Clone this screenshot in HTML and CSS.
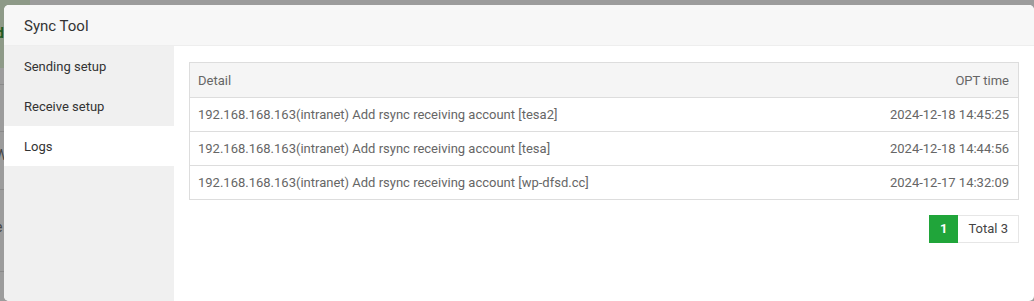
FILE: index.html
```html
<!DOCTYPE html>
<html lang="en">
<head>
    <meta charset="UTF-8">
    <title>Sync Tool</title>
    <link rel="stylesheet" href="styles.css">
</head>
<body>
    <!-- page behind the overlay, only its left edge shows -->
    <div class="page">
        <div class="page-top">d</div>
        <div class="page-row r1"></div>
        <div class="page-row r2">r</div>
        <div class="page-row r3">W</div>
        <div class="page-row r4">e</div>
        <div class="page-row r5">-</div>
    </div>

    <div class="layer">
        <div class="layer-title">Sync Tool</div>
        <div class="layer-body">
            <ul class="tabs">
                <li>Sending setup</li>
                <li>Receive setup</li>
                <li class="on">Logs</li>
            </ul>
            <div class="content">
                <table class="logs">
                    <thead>
                        <tr>
                            <th>Detail</th>
                            <th class="right">OPT time</th>
                        </tr>
                    </thead>
                    <tbody>
                        <tr>
                            <td>192.168.168.163(intranet) Add rsync receiving account [tesa2]</td>
                            <td class="right">2024-12-18 14:45:25</td>
                        </tr>
                        <tr>
                            <td>192.168.168.163(intranet) Add rsync receiving account [tesa]</td>
                            <td class="right">2024-12-18 14:44:56</td>
                        </tr>
                        <tr>
                            <td>192.168.168.163(intranet) Add rsync receiving account [wp-dfsd.cc]</td>
                            <td class="right">2024-12-17 14:32:09</td>
                        </tr>
                    </tbody>
                </table>
                <div class="page-nav">
                    <span class="current">1</span>
                    <span class="total">Total 3</span>
                </div>
            </div>
        </div>
    </div>
</body>
</html>
```

FILE: styles.css
```css
html,
body {
    height: 301px;
    overflow: hidden;
}

body {
    margin: 0;
    background: #9c9c9c;
    font-family: Roboto, "Noto Sans", Arial, sans-serif;
    font-size: 13px;
}

.page {
    width: 30px;
    color: #444;
    font-size: 14px;
}

.page-top {
    height: 68px;
    background: #8e9a88;
    color: #1e5a1e;
    font-weight: bold;
    line-height: 66px;
    text-indent: -4px;
}

.page-row {
    border-bottom: 1px solid #8a8a8a;
    text-indent: -5px;
}

.page-row.r1 { height: 16px; }
.page-row.r2 { height: 46px; line-height: 38px; }
.page-row.r3 { height: 57px; line-height: 46px; }
.page-row.r4 { height: 81px; line-height: 74px; }
.page-row.r5 { height: 28px; line-height: 28px; border-bottom: none; }

.layer {
    position: absolute;
    left: 4px;
    top: 5px;
    width: 1030px;
    height: 296px;
    background: #fff;
    border-radius: 5px;
    overflow: hidden;
    display: flex;
    flex-direction: column;
}

.layer-title {
    height: 40px;
    line-height: 42px;
    padding-left: 20px;
    background: #f7f7f7;
    border-bottom: 1px solid #eee;
    color: #333;
    font-size: 15px;
}

.layer-body {
    flex: 1;
    display: flex;
}

.tabs {
    list-style: none;
    margin: 0;
    padding: 0;
    width: 170px;
    background: #f0f0f0;
}

.tabs li {
    height: 40px;
    line-height: 42px;
    padding-left: 20px;
    color: #333;
}

.tabs li.on {
    background: #fff;
}

.content {
    flex: 1;
    padding: 16px 15px 0 15px;
}

.logs {
    width: 100%;
    border-collapse: collapse;
    color: #666;
}

.logs th,
.logs td {
    border: 1px solid #ddd;
    border-left: none;
    border-right: none;
    height: 33px;
    padding: 0 9px 0 8px;
    text-align: left;
    font-weight: normal;
}

.logs tr th:first-child,
.logs tr td:first-child {
    border-left: 1px solid #ddd;
}

.logs tr th:last-child,
.logs tr td:last-child {
    border-right: 1px solid #ddd;
}

.logs th {
    background: #f5f5f5;
    height: 34px;
}

.logs .right {
    text-align: right;
}

.page-nav {
    display: flex;
    justify-content: flex-end;
    margin-top: 15px;
}

.page-nav span {
    height: 26px;
    line-height: 26px;
    border: 1px solid #e6e6e6;
    padding: 0 10px;
    color: #444;
}

.page-nav .current {
    background: #20a53a;
    border-color: #20a53a;
    color: #fff;
    font-weight: bold;
    padding: 0 10px;
}

.page-nav .total {
    border-left: none;
}
```
